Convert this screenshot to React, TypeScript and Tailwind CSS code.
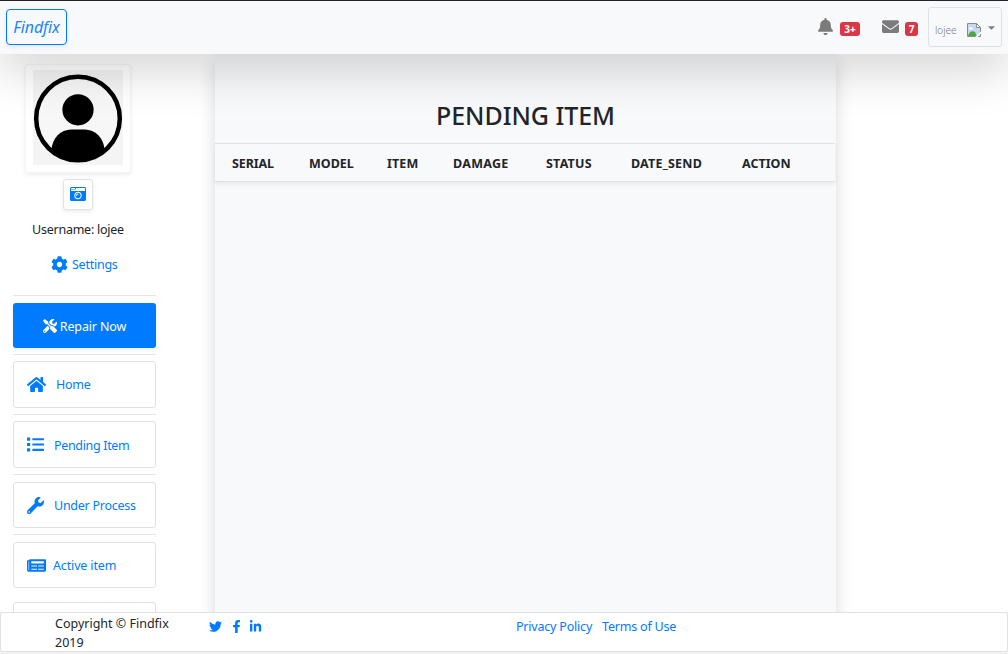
import type { ReactNode } from 'react';
import {
  FaBell,
  FaCameraRetro,
  FaCaretDown,
  FaCog,
  FaEnvelope,
  FaFacebookF,
  FaHome,
  FaLinkedinIn,
  FaList,
  FaNewspaper,
  FaTools,
  FaTwitter,
  FaWrench,
} from 'react-icons/fa';

const columns = [
  { label: 'SERIAL', width: 'w-[77px]', tracking: 'tracking-[-0.1px]' },
  { label: 'MODEL', width: 'w-[78px]', tracking: 'tracking-[0px]' },
  { label: 'ITEM', width: 'w-[66px]', tracking: 'tracking-[0.1px]' },
  { label: 'DAMAGE', width: 'w-[93px]', tracking: 'tracking-[0.3px]' },
  { label: 'STATUS', width: 'w-[85px]', tracking: 'tracking-[0.2px]' },
  { label: 'DATE_SEND', width: 'w-[111px]', tracking: 'tracking-[0.2px]' },
  { label: 'ACTION', width: 'w-[80px]', tracking: 'tracking-[0px]' },
];

function BrokenImage() {
  return (
    <svg width="14" height="14" viewBox="0 0 14 14" className="shrink-0">
      <path d="M.5.5h9l4 4v9H.5z" fill="#c5d9f7" stroke="#8a8a8a" />
      <path d="M2 5.500c0-2 3-2 3-.5 1.500 0 1.500 1.500 0 1.500H2z" fill="#fff" />
      <path d="M1 13c1-4 4-6 7-4l2 4z" fill="#4ea835" />
      <path d="M9.500.5v4h4z" fill="#fff" stroke="#8a8a8a" />
      <path d="M8 14l6-5.500v2L10.500 14z" fill="#fff" />
    </svg>
  );
}

function Avatar() {
  return (
    <svg width="90" height="95" viewBox="0 0 90 95">
      <rect width="90" height="95" fill="#f4f4f4" />
      <clipPath id="disc">
        <circle cx="45" cy="48.500" r="43" />
      </clipPath>
      <circle cx="45" cy="48.500" r="41.800" fill="#f7f7f7" stroke="#000" strokeWidth="4.500" />
      <circle cx="45" cy="39.800" r="15.600" />
      <path d="M18.500 80C19 68 28 59.500 38 59.500h14C62 59.500 71 68 71.500 80v15h-53z" clipPath="url(#disc)" />
    </svg>
  );
}

function NavItem({ icon, box, children }: { icon: ReactNode; box: string; children: ReactNode }) {
  return (
    <a
      href="#"
      className={`flex shrink-0 items-center rounded-[3px] border border-[#dee2e6] bg-white pl-[13px] text-[#007bff] ${box}`}
    >
      {icon}
      {children}
    </a>
  );
}

const Rule = ({ top }: { top: string }) => <div className={`h-px shrink-0 bg-[#e6e6e6] ${top}`} />;

export default function App() {
  return (
    <div className="flex h-[654px] w-[1008px] flex-col overflow-hidden bg-[#f1f1f1] font-['Noto_Sans',sans-serif] text-[12.5px] leading-[19px] tracking-[-0.25px] text-[#212529]">
      <header className="relative z-10 flex h-[54px] shrink-0 items-start border-t border-[#25222c] bg-[#f8f9fb] pl-[6px] pr-[6px] shadow-[0_16px_48px_rgba(0,0,0,0.175)]">
        <a
          href="#"
          className="mt-[8px] flex h-[36px] w-[61px] items-center justify-center rounded-[4px] border border-[#007bff] bg-[#f8f9fb] pt-px text-[16px] italic tracking-[-0.1px] text-[#1b86f5] shadow-[0_2px_4px_rgba(0,0,0,0.075)]"
        >
          Findfix
        </a>
        <div className="ml-auto flex items-start text-[#7b7b7b]">
          <FaBell className="mt-[17px] h-[17px] w-[15px]" />
          <span className="ml-[7px] mt-[21px] flex h-[14px] w-[20px] items-center justify-center rounded-[3px] bg-[#dc3545] text-[10px] font-bold leading-none tracking-normal text-white">
            3+
          </span>
          <FaEnvelope className="ml-[22px] mt-[17px] size-[17px]" />
          <span className="ml-[6px] mt-[21px] flex h-[14px] w-[13px] items-center justify-center rounded-[3px] bg-[#dc3545] text-[10px] font-bold leading-none tracking-normal text-white">
            7
          </span>
          <div className="ml-[10px] mt-[6px] flex h-[40px] w-[74px] items-center rounded-[3px] border border-[#dee2e6] pl-[6px]">
            <span className="mt-[6px] w-[32px] text-[10px] font-light tracking-[0px]">lojee</span>
            <span className="mt-[5px]">
              <BrokenImage />
            </span>
            <FaCaretDown className="ml-[5px] size-[11px]" />
          </div>
        </div>
      </header>

      <div className="flex h-[558px] shrink-0 overflow-hidden bg-white">
        <aside className="flex w-[156px] shrink-0 flex-col pl-[13px]">
          <div className="flex w-[130px] shrink-0 flex-col items-center">
            <div className="mt-[10px] flex h-[109px] w-[106px] justify-center rounded-[3px] border border-[#f5f5f5] bg-white pt-[5px] shadow-[0_2px_4px_rgba(0,0,0,0.075)]">
              <Avatar />
            </div>
            <button className="mt-[6px] flex h-[31px] w-[30px] items-center justify-center rounded-[3px] border border-[#dee2e6] bg-white pb-px text-[#007bff] shadow-[0_2px_4px_rgba(0,0,0,0.075)]">
              <FaCameraRetro className="size-[16px]" />
            </button>
            <div className="mt-[10px]">Username: lojee</div>
          </div>
          <a href="#" className="mt-[16px] flex items-center gap-[4px] pl-[38px] text-[#007bff]">
            <FaCog className="size-[17px]" />
            <span>Settings</span>
          </a>
          <Rule top="mt-[21px]" />
          <a
            href="#"
            className="mt-[7px] flex h-[45px] shrink-0 items-center justify-center gap-[3px] rounded-[3px] bg-[#007bff] text-white shadow-[0_2px_4px_rgba(0,0,0,0.075)]"
          >
            <FaTools className="size-[14px]" />
            <span className="pt-[2px] tracking-[-0.15px]">Repair Now</span>
          </a>
          <Rule top="mt-[6px]" />
          <NavItem box="mt-[6px] h-[47px] gap-[10px]" icon={<FaHome className="size-[19px]" />}>
            <span>Home</span>
          </NavItem>
          <Rule top="mt-[6px]" />
          <NavItem box="mt-[6px] h-[47px] gap-[10px]" icon={<FaList className="size-[17px]" />}>
            <span className="pt-[2px] tracking-[-0.33px]">Pending Item</span>
          </NavItem>
          <Rule top="mt-[6px]" />
          <NavItem box="mt-[7px] h-[46px] gap-[10px]" icon={<FaWrench className="size-[17px]" />}>
            <span>Under Process</span>
          </NavItem>
          <Rule top="mt-[6px]" />
          <NavItem box="mt-[7px] h-[46px] gap-[7px]" icon={<FaNewspaper className="size-[19px]" />}>
            <span className="tracking-[-0.15px]">Active item</span>
          </NavItem>
          <div className="mt-[14px] h-[47px] shrink-0 rounded-[3px] border border-[#dee2e6] bg-white" />
        </aside>

        <main className="ml-[59px] h-[620px] w-[621px] bg-[#f8f9fb] shadow-[0_8px_16px_rgba(0,0,0,0.15)]">
          <h1 className="mt-[42px] text-center text-[25px] font-medium leading-[38px] tracking-[-0.05px]">PENDING ITEM</h1>
          <div className="mt-[9px] flex h-[39px] w-[620px] items-center border-y border-[#dee2e6] pl-[17px] pt-px font-bold shadow-[0_2px_4px_rgba(0,0,0,0.075)]">
            {columns.map((c) => (
              <span key={c.label} className={`shrink-0 ${c.width} ${c.tracking}`}>
                {c.label}
              </span>
            ))}
          </div>
        </main>
      </div>

      <footer className="relative z-20 flex h-[40px] shrink-0 items-start rounded-[3px] border border-[#dee2e6] bg-white">
        <div className="ml-[54px] mt-px w-[122px] tracking-[0px]">
          <span>Copyright © Findfix</span>
          <br />
          <span>2019</span>
        </div>
        <div className="ml-[32px] mt-[7px] flex w-[307px] items-center text-[#007bff]">
          <FaTwitter className="size-[13px]" />
          <FaFacebookF className="ml-[8px] size-[13px]" />
          <FaLinkedinIn className="ml-[6px] size-[13px]" />
        </div>
        <nav className="mt-[4px] flex gap-[10px] tracking-[-0.2px] text-[#007bff]">
          <a href="#">Privacy Policy</a>
          <a href="#">Terms of Use</a>
        </nav>
      </footer>
    </div>
  );
}
